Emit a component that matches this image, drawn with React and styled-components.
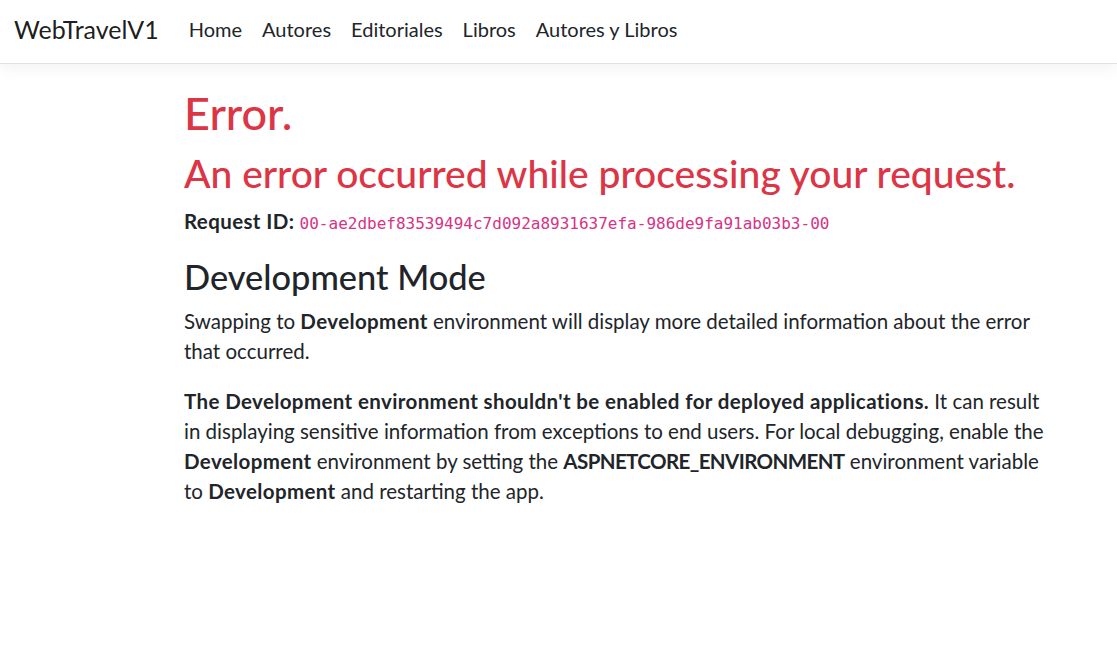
import styled, { createGlobalStyle } from 'styled-components';

const FONT = `Lato, "Noto Sans", sans-serif`;

const GlobalStyle = createGlobalStyle`
  body {
    margin: 0;
    background: #fff;
    color: #212529;
    font-family: ${FONT};
    font-size: 20.5px;
    line-height: 30px;
  }
`;

const Header = styled.header`
  height: 64px;
  box-sizing: border-box;
  padding: 0 14px 5px;
  border-bottom: 1px solid #dee2e6;
  box-shadow: 0 5px 15px rgba(0, 0, 0, 0.05);
  display: flex;
  align-items: center;
  margin-bottom: 23px;
`;

const Brand = styled.a`
  font-size: 25px;
  color: rgba(0, 0, 0, 0.9);
  margin-right: 20px;
  text-decoration: none;
`;

const NavList = styled.nav`
  display: flex;
`;

const NavLink = styled.a`
  color: #212529;
  padding: 0 10px;
  font-size: 20px;
  text-decoration: none;
`;

const Main = styled.main`
  width: 868px;
  padding-left: 184px;
`;

const Title = styled.h1`
  color: #dc3545;
  font-size: ${p => p.size}px;
  line-height: ${p => p.lh}px;
  font-weight: 500;
  margin: 0 0 ${p => p.mb}px;
`;

const Heading = styled.h3`
  font-size: 34.4px;
  line-height: 39.2px;
  font-weight: 500;
  margin: 0 0 10px;
`;

const Para = styled.p`
  margin: 0 0 ${p => p.mb || 20}px;
`;

const Bold = styled.strong`
  font-weight: 700;
  letter-spacing: ${p => (p.caps ? -0.6 : 0.38)}px;
`;

const Code = styled.code`
  font-family: "DejaVu Sans Mono", monospace;
  font-size: 16px;
  color: #d63384;
`;

const links = ['Home', 'Autores', 'Editoriales', 'Libros', 'Autores y Libros'];

function App() {
  return (
    <>
      <GlobalStyle />
      <Header>
        <Brand href="#">WebTravelV1</Brand>
        <NavList>
          {links.map(l => <NavLink key={l} href="#">{l}</NavLink>)}
        </NavList>
      </Header>
      <Main>
        <Title size={45} lh={53} mb={12}>Error.</Title>
        <Title as="h2" size={39} lh={43.8} mb={10}>An error occurred while processing your request.</Title>
        <Para mb={18}>
          <Bold>Request ID:</Bold> <Code>00-ae2dbef83539494c7d092a8931637efa-986de9fa91ab03b3-00</Code>
        </Para>
        <Heading>Development Mode</Heading>
        <Para>
          Swapping to <Bold>Development</Bold> environment will display more detailed information about the error that occurred.
        </Para>
        <Para>
          <Bold>The Development environment shouldn't be enabled for deployed applications.</Bold> It can result in displaying sensitive information from exceptions to end users. For local debugging, enable the <Bold>Development</Bold> environment by setting the <Bold caps>ASPNETCORE_ENVIRONMENT</Bold> environment variable to <Bold>Development</Bold> and restarting the app.
        </Para>
      </Main>
    </>
  );
}

export default App;
